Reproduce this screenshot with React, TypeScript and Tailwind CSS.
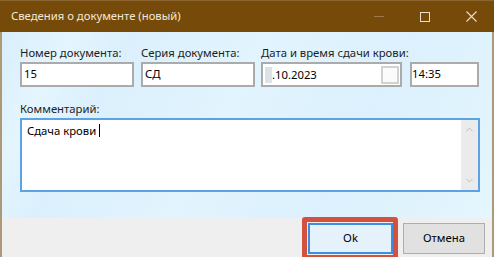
import { ChevronUp, ChevronDown } from 'lucide-react';

const font = { fontFamily: '"Noto Sans", "Open Sans", sans-serif' };

function Field({ label, value, width }: { label: string; value: string; width: string }) {
  return (
    <div className={`flex flex-col ${width}`}>
      <span className="h-[16px] leading-[16px] text-[11.3px] text-[#1e1e1e]">{label}</span>
      <div className="mt-[1px] h-[25px] border-2 border-[#ababab] bg-white px-[2px] leading-[20px] text-[11.3px] text-black">
        {value}
      </div>
    </div>
  );
}

export default function App() {
  return (
    <div
      className="w-[494px] h-[257px] flex flex-col overflow-hidden bg-[#efefef]"
      style={font}
    >
      {/* Title bar */}
      <div className="h-[32px] shrink-0 flex items-center bg-[#764a09] border-t border-[#8a6530]">
        <span className="ml-[11px] text-[11.3px] text-[#f2e8d8]">Сведения о документе (новый)</span>
        <div className="ml-auto flex items-center h-full">
          <div className="w-[46px] h-full flex items-center justify-center">
            <div className="w-[10px] h-px bg-[#9c7a4a]" />
          </div>
          <div className="w-[46px] h-full flex items-center justify-center">
            <div className="w-[10px] h-[10px] border border-[#eadfcc]" />
          </div>
          <div className="w-[46px] h-full flex items-center justify-center">
            <svg width="11" height="11" viewBox="0 0 11 11" stroke="#eadfcc" strokeWidth="1.1">
              <path d="M0.5 0.5 L10.5 10.5 M10.5 0.5 L0.5 10.5" />
            </svg>
          </div>
        </div>
      </div>

      <div className="flex-1 flex flex-col border-x-2 border-[#ad9877]">
        {/* Body */}
        <div className="h-[186px] pl-[18px] pt-[13px] bg-[linear-gradient(118deg,#d9eefc_0%,#e4f5fe_12%,#dbf0fc_22%,#e2f4fe_45%,#dcf1fd_70%,#e4f6fe_100%)]">
          <div className="flex">
            <Field label="Номер документа:" value="15" width="w-[114px]" />
            <div className="w-[7px]" />
            <Field label="Серия документа:" value="СД" width="w-[114px]" />
            <div className="w-[6px]" />
            <div className="flex flex-col">
              <span className="h-[16px] leading-[16px] text-[11.3px] text-[#1e1e1e]">
                Дата и время сдачи крови:
              </span>
              <div className="mt-[1px] flex">
                <div className="w-[141px] h-[25px] border-2 border-[#ababab] bg-white flex items-center pl-[2px] pr-[1px]">
                  <span className="w-[7px] h-[16px] bg-[#dde1e8]" />
                  <span className="text-[11.3px] text-black leading-[20px]">.10.2023</span>
                  <div className="ml-auto w-[18px] h-[18px] border-2 border-[#d2d2d2] bg-[#fbfbfb]" />
                </div>
                <div className="w-[8px]" />
                <div className="w-[69px] h-[25px] border-2 border-[#ababab] bg-white leading-[20px] text-[11.3px] text-black">
                  14:35
                </div>
              </div>
            </div>
          </div>

          <div className="mt-[14px] h-[16px] leading-[16px] text-[11.3px] text-[#1e1e1e]">Комментарий:</div>
          <div className="mt-[1px] w-[460px] h-[74px] border-2 border-[#5ba3e4] bg-white flex">
            <div className="flex-1 pl-[5px] pt-[3px] text-[11.3px] leading-[16px] text-black flex items-start">
              <span>Сдача крови</span>
              <span className="ml-[3px] mt-[1px] w-px h-[13px] bg-black" />
            </div>
            <div className="w-[17px] h-full bg-[#ebebeb] flex flex-col items-center justify-between py-[4px]">
              <ChevronUp size={11} strokeWidth={1.5} color="#a8a8a8" />
              <ChevronDown size={11} strokeWidth={1.5} color="#a8a8a8" />
            </div>
          </div>
        </div>

        {/* Footer */}
        <div className="flex-1 flex justify-end items-start pt-[5px] pr-[7px]">
          <div className="relative">
            <button className="w-[85px] h-[31px] border-2 border-[#3c8ede] bg-[#e5f1fb] text-[11.3px] text-black">
              Ok
            </button>
            <div className="absolute -left-[6px] -top-[6px] -right-[5px] -bottom-[6px] border-[5px] border-[#d2513f] rounded-[3px]" />
          </div>
          <button className="ml-[10px] w-[82px] h-[31px] border border-[#adadad] bg-[#e1e1e1] text-[11.3px] text-black">
            Отмена
          </button>
        </div>
      </div>
    </div>
  );
}
